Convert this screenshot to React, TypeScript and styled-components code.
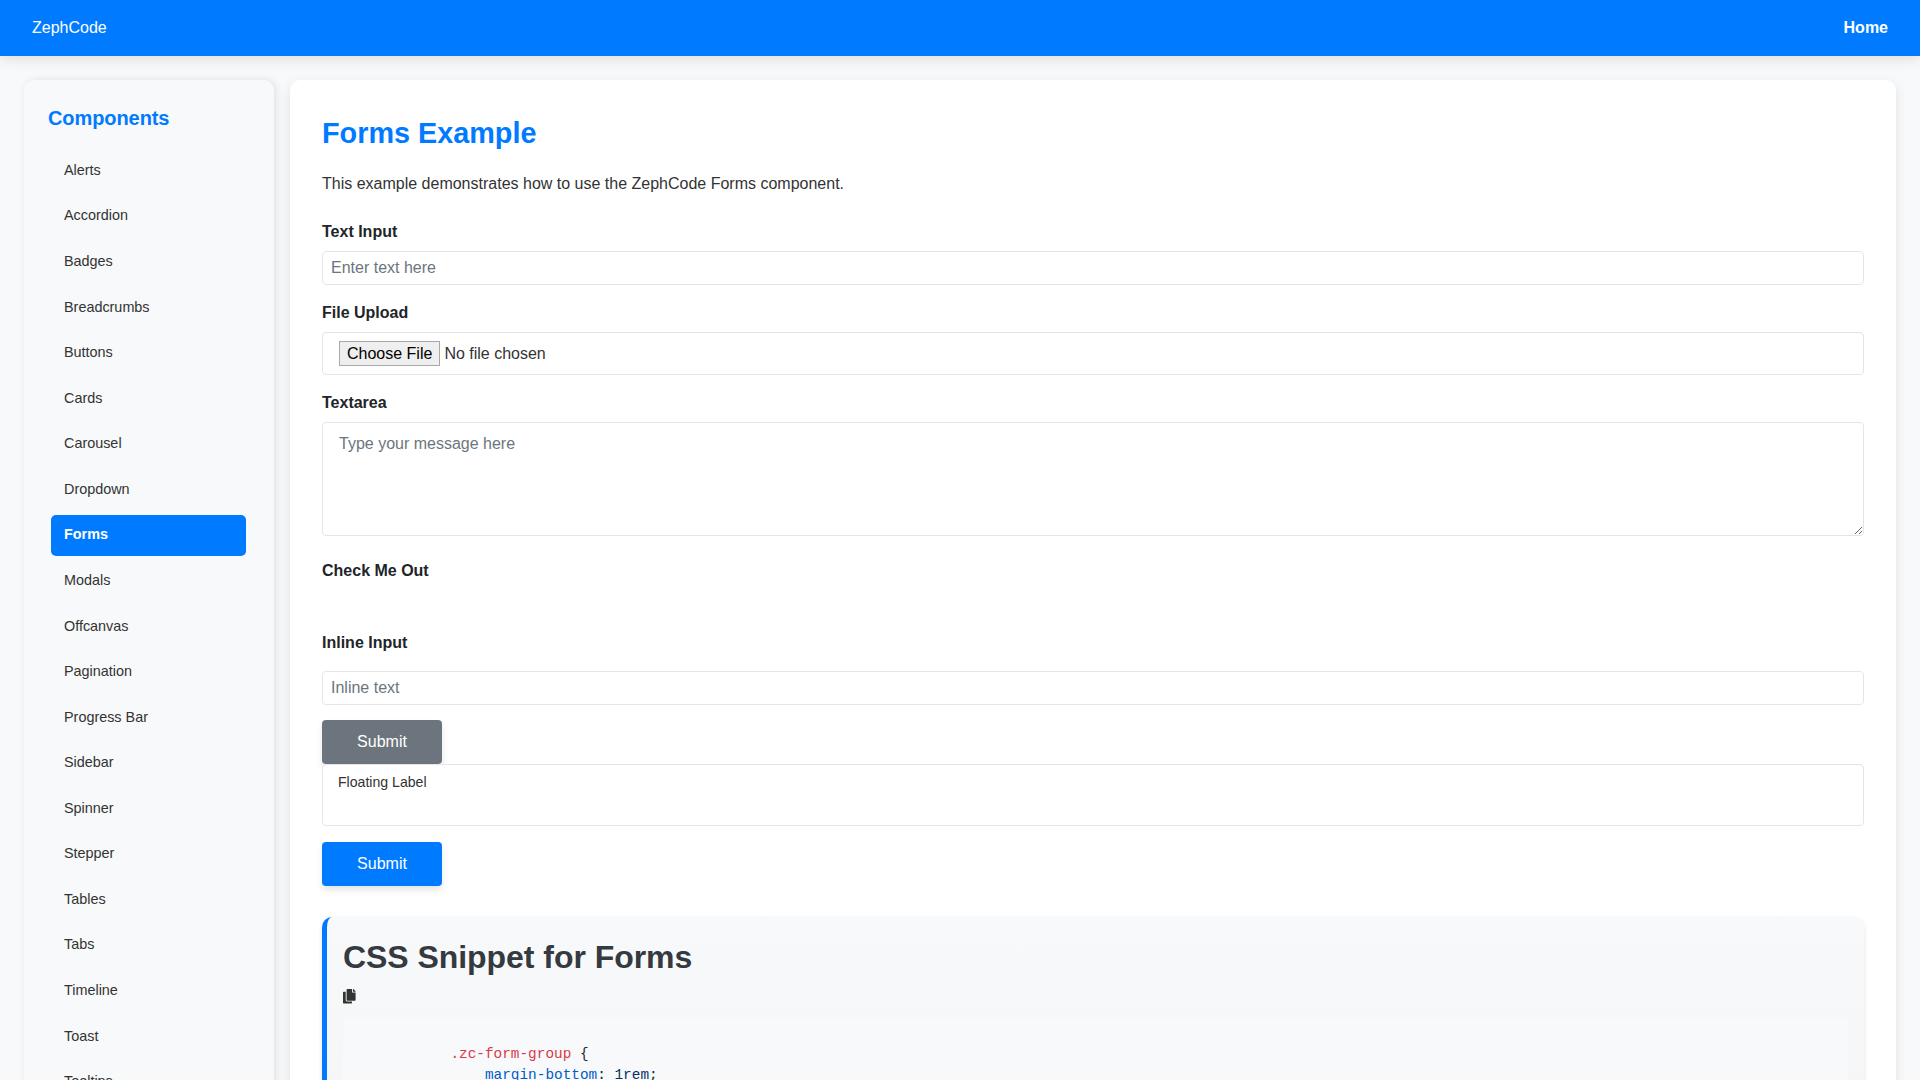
import React from "react";
import styled, { createGlobalStyle, css } from "styled-components";
import { FaCopy } from "react-icons/fa";

const sans = `"Liberation Sans", Arial, Helvetica, sans-serif`;
const mono = `"Liberation Mono", "Courier New", monospace`;

const GlobalStyle = createGlobalStyle`
  *, *::before, *::after { box-sizing: border-box; }
  body {
    margin: 0;
    background: #f8f9fa;
    color: #333;
    font: 16px/1.6 ${sans};
  }
  h1, h2, h3, p, ul, pre { margin: 0; padding: 0; }
`;

const Page = styled.div`
  display: flex;
  flex-direction: column;
  height: 100vh;
  overflow: hidden;
`;

const Navbar = styled.header`
  flex: none;
  display: flex;
  align-items: center;
  justify-content: space-between;
  height: 56px;
  padding: 0 32px 1px;
  background: #007bff;
  box-shadow: 0 4px 12px rgba(0, 0, 0, 0.1);
`;

const NavLink = styled.a<{ $bold?: boolean }>`
  color: #fff;
  text-decoration: none;
  font-weight: ${(p) => (p.$bold ? 700 : 400)};
`;

const Body = styled.div`
  flex: 1;
  display: flex;
  align-items: flex-start;
  gap: 16px;
  padding: 24px 24px 0;
`;

const Sidebar = styled.aside`
  flex: none;
  width: 250px;
  padding: 24px;
  background: #f8f9fa;
  border-radius: 10px;
  box-shadow: 2px 0 8px rgba(0, 0, 0, 0.1);
`;

const SidebarTitle = styled.h3`
  margin-bottom: 18.2px;
  color: #007bff;
  font-size: 20px;
  line-height: 28px;
  letter-spacing: -0.08px;
`;

const Menu = styled.ul`
  display: flex;
  flex-direction: column;
  gap: 4.6px;
  padding: 0 3.6px 0 3.2px;
  list-style: none;
`;

const MenuLink = styled.a<{ $active?: boolean }>`
  display: block;
  padding: 7.7px 12.8px;
  border-radius: 5px;
  color: #333;
  font-size: 14.4px;
  line-height: 25.6px;
  text-decoration: none;
  ${(p) =>
    p.$active &&
    css`
      background: #007bff;
      color: #fff;
      font-weight: 700;
    `}
`;

const Main = styled.main`
  flex: 1;
  min-width: 0;
  padding: 32px;
  background: #fff;
  border-radius: 10px;
  box-shadow: 0 4px 12px rgba(0, 0, 0, 0.1);
`;

const Title = styled.h1`
  margin-bottom: 17px;
  color: #007bff;
  font-size: 28.8px;
  line-height: 42px;
`;

const Intro = styled.p`
  margin-bottom: 22.4px;
`;

const Group = styled.div`
  margin-bottom: 15.6px;
`;

const Label = styled.label<{ $gap?: number }>`
  display: block;
  margin-bottom: ${(p) => p.$gap ?? 6.4}px;
  color: #212529;
  font-weight: 700;
`;

const CheckGroup = styled.div`
  margin: 22px 0 46.4px;
`;

const control = css`
  display: block;
  width: 100%;
  border: 1px solid #e3e6e9;
  border-radius: 4px;
  background: #fff;
  color: #333;
  font: 16px ${sans};
  outline: none;
  &::placeholder {
    color: #6c757d;
    opacity: 1;
  }
`;

const TextInput = styled.input`
  ${control}
  height: 33.8px;
  padding: 0 8px;
`;

const FileInput = styled.input`
  ${control}
  height: 42.4px;
  padding: 8px 16px;
  &::file-selector-button {
    height: 25px;
    margin: 0 4px 0 0;
    padding: 1px 7px;
    border: 1px solid #a8a8a8;
    border-radius: 0;
    background: #efefef;
    color: #000;
    font: 16px ${sans};
  }
`;

const TextArea = styled.textarea`
  ${control}
  height: 113.6px;
  padding: 9px 16px 8px;
  line-height: 24px;
  resize: vertical;
`;

const Button = styled.button<{ $tone: string }>`
  display: block;
  width: 120px;
  height: 43.8px;
  padding: 0;
  border: 0;
  border-radius: 4px;
  background: ${(p) => p.$tone};
  color: #fff;
  font: 16px ${sans};
  box-shadow: 0 4px 6px rgba(0, 0, 0, 0.1);
`;

const FloatingField = styled.div`
  ${control}
  position: relative;
  height: 61.8px;
  margin-bottom: 16px;
  padding: 5px 15px;
  font-size: 14.1px;
  line-height: 25.6px;
`;

const Snippet = styled.section`
  margin-top: 31.6px;
  padding: 16px;
  border-left: 5px solid #007bff;
  border-radius: 10px;
  background: linear-gradient(#f8f9fa, #f1f1f1 500px);
  box-shadow: 0 2px 5px rgba(0, 0, 0, 0.1);
`;

const SnippetTitle = styled.h2`
  margin-bottom: 8.2px;
  color: #343a40;
  font-size: 32px;
  line-height: 48px;
  letter-spacing: -0.05px;
`;

const CopyIcon = styled(FaCopy)`
  display: block;
  width: 12.6px;
  height: 14.4px;
  margin-bottom: 14.2px;
  color: #333;
`;

const Code = styled.pre`
  padding: 26.4px 16px 23.5px 107.4px;
  background: #f8f9fb;
  color: #24292e;
  font: 14.4px/21px ${mono};
  overflow: hidden;
`;

const Selector = styled.span`
  color: #d73a49;
`;
const Property = styled.span`
  color: #005cc5;
`;
const Value = styled.span`
  color: #032f62;
`;

const items = [
  "Alerts", "Accordion", "Badges", "Breadcrumbs", "Buttons", "Cards", "Carousel",
  "Dropdown", "Forms", "Modals", "Offcanvas", "Pagination", "Progress Bar", "Sidebar",
  "Spinner", "Stepper", "Tables", "Tabs", "Timeline", "Toast", "Tooltips",
];

export default function App() {
  return (
    <Page>
      <GlobalStyle />
      <Navbar>
        <NavLink>ZephCode</NavLink>
        <NavLink $bold>Home</NavLink>
      </Navbar>
      <Body>
        <Sidebar>
          <SidebarTitle>Components</SidebarTitle>
          <Menu>
            {items.map((item) => (
              <li key={item}>
                <MenuLink $active={item === "Forms"}>{item}</MenuLink>
              </li>
            ))}
          </Menu>
        </Sidebar>
        <Main>
          <Title>Forms Example</Title>
          <Intro>This example demonstrates how to use the ZephCode Forms component.</Intro>
          <Group>
            <Label>Text Input</Label>
            <TextInput placeholder="Enter text here" />
          </Group>
          <Group>
            <Label>File Upload</Label>
            <FileInput type="file" />
          </Group>
          <Group>
            <Label>Textarea</Label>
            <TextArea placeholder="Type your message here" />
          </Group>
          <CheckGroup>
            <Label $gap={0}>Check Me Out</Label>
          </CheckGroup>
          <Group>
            <Label $gap={15.4}>Inline Input</Label>
            <TextInput placeholder="Inline text" />
          </Group>
          <Button $tone="#6c757d">Submit</Button>
          <FloatingField>Floating Label</FloatingField>
          <Button $tone="#007bff">Submit</Button>
          <Snippet>
            <SnippetTitle>CSS Snippet for Forms</SnippetTitle>
            <CopyIcon />
            <Code>
              <Selector>.zc-form-group</Selector>
              {" {\n    "}
              <Property>margin-bottom</Property>
              {": "}
              <Value>1rem</Value>
              {";"}
            </Code>
          </Snippet>
        </Main>
      </Body>
    </Page>
  );
}
